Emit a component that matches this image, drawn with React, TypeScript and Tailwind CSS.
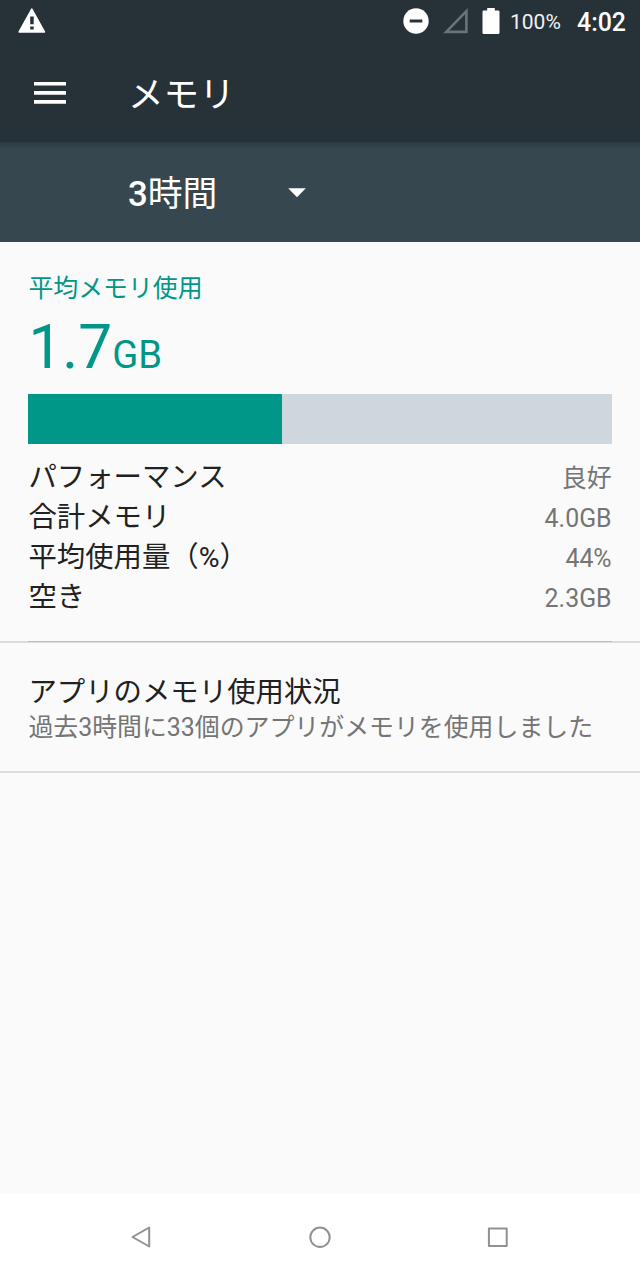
import type {ReactNode} from 'react'

const stats = [
  {label: 'パフォーマンス', value: '良好'},
  {label: '合計メモリ', value: '4.0GB'},
  {label: '平均使用量（%）', value: '44%'},
  {label: '空き', value: '2.3GB'},
]

function StatusBar() {
  return (
    <div className="flex h-11 items-center pl-[18px] pr-[14px]">
      <svg width="28" height="26" viewBox="0 0 28 26" className="-mt-0.5">
        <path
          d="M13.8 1.2 26.4 24H1.2Z"
          fill="#fff"
          stroke="#fff"
          strokeWidth="1.6"
          strokeLinejoin="round"
        />
        <path d="M12.2 8.6h3.5v7.6h-3.5zM12.2 18.4h3.5v3.2h-3.5z" fill="#263238" />
      </svg>
      <div className="ml-auto flex items-center">
        <svg width="26" height="26" viewBox="0 0 26 26" className="-mt-0.5">
          <circle cx="13" cy="13" r="12.7" fill="#fff" />
          <path d="M6.7 11.5h12.6v3H6.7z" fill="#263238" />
        </svg>
        <svg width="26" height="26" viewBox="0 0 26 26" className="-mt-0.5 ml-[14px]">
          <path
            d="M3.2 23.9H23.4V3.2Z"
            fill="none"
            stroke="#69737a"
            strokeWidth="2.6"
          />
        </svg>
        <svg width="18" height="26" viewBox="0 0 18 26" className="-mt-0.5 ml-[13px]">
          <path
            d="M5.2 0h7.6v2.4h3.4q1.3 0 1.3 1.3v21q0 1.3-1.3 1.3H1.8q-1.3 0-1.3-1.3v-21q0-1.3 1.3-1.3h3.4z"
            fill="#fff"
          />
        </svg>
        <span className="ml-[10px] mt-px w-[67px] text-[21px] leading-none text-[#f1f2f3]">
          100%
        </span>
        <span className="mt-0.5 text-[24.9px] font-medium leading-none">4:02</span>
      </div>
    </div>
  )
}

function Toolbar() {
  return (
    <div className="flex h-[98px] items-center pl-[34px]">
      <svg width="32" height="22" viewBox="0 0 32 22" fill="#fff">
        <path d="M0 0h32v3.6H0zM0 9.1h32v3.6H0zM0 18.1h32v3.6H0z" />
      </svg>
      <h1 className="ml-[62px] mt-1 text-[35.6px] leading-10">メモリ</h1>
    </div>
  )
}

function DurationSelect() {
  return (
    <div className="flex h-[100px] items-center bg-linear-to-b from-[#2d3a41] to-[#37474f] to-7% pl-32 pt-1 text-white">
      <span className="-mt-px w-[160px] text-[34.8px] font-medium leading-10">
        3<span className="font-normal">時間</span>
      </span>
      <svg width="18" height="10" viewBox="0 0 18 10" className="-mt-0.5">
        <path d="M.2.3h17.6L9 9.3z" fill="#fff" />
      </svg>
    </div>
  )
}

function NavButton({children}: {children: ReactNode}) {
  return (
    <svg
      width="28"
      height="28"
      viewBox="0 0 28 28"
      fill="none"
      stroke="#919191"
      strokeWidth="2"
      strokeLinejoin="round"
    >
      {children}
    </svg>
  )
}

export default function App() {
  return (
    <div className="flex h-[1280px] w-[640px] flex-col bg-[#fafafa] font-['Roboto','Noto_Sans_CJK_JP',sans-serif] text-[#212121]">
      <header className="bg-[#263238] text-white">
        <StatusBar />
        <Toolbar />
      </header>
      <DurationSelect />

      <main className="flex-1">
        <section className="px-[28.4px] pt-[31px]">
          <h2 className="text-[24.9px] leading-8 text-[#009688]">平均メモリ使用</h2>
          <p className="mt-2 h-[70px] text-[60.4px] leading-[70px] text-[#009688]">
            1.7<span className="text-[38.2px]">GB</span>
          </p>
          <div className="mt-[11px] flex h-[50px] bg-[#ced7de]">
            <div className="w-[253.5px] bg-[#009688]" />
          </div>
          <dl className="mt-[14px]">
            {stats.map(({label, value}) => (
              <div key={label} className="flex h-10 items-baseline justify-between">
                <dt className="text-[28.4px] leading-10">{label}</dt>
                <dd className="text-[24.9px] leading-10 text-[#757575]">{value}</dd>
              </div>
            ))}
          </dl>
        </section>
        <div className="mt-[23px] flex h-0.5 bg-[#dcdcdc] px-[28.4px]">
          <div className="h-px flex-1 bg-[#bcbcbc]" />
        </div>
        <section className="border-b-2 border-[#dcdcdc] px-[28.4px] pb-[25px] pt-8">
          <h2 className="text-[28.4px] leading-9">アプリのメモリ使用状況</h2>
          <p className="-mt-px text-[24.9px] leading-9 text-[#757575]">
            過去3時間に33個のアプリがメモリを使用しました
          </p>
        </section>
      </main>

      <nav className="flex h-[86px] items-center justify-between bg-white px-[128px]">
        <NavButton>
          <path d="M4.5 14 21.2 4.5V23.5Z" />
        </NavButton>
        <NavButton>
          <circle cx="14" cy="14.3" r="9.7" />
        </NavButton>
        <NavButton>
          <path d="M4.9 5.4h17.8v17.6H4.9z" />
        </NavButton>
      </nav>
    </div>
  )
}
